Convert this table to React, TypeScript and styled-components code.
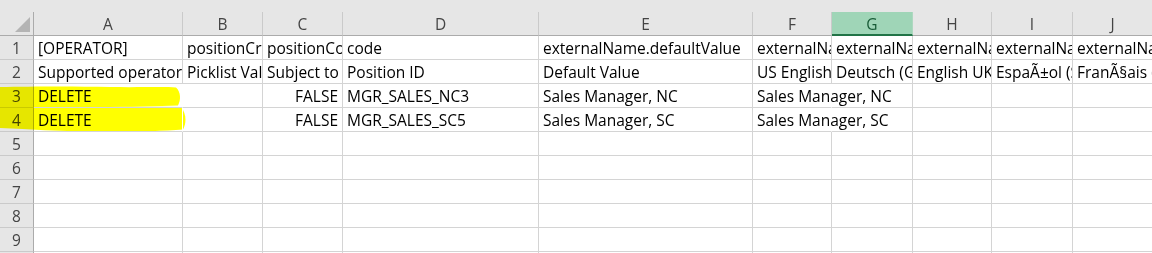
import React from "react";
import styled, {createGlobalStyle} from "styled-components";

const GlobalStyle = createGlobalStyle`
  html, body {
    margin: 0;
    padding: 0;
    background: #ffffff;
    overflow: hidden;
  }
`

type Cell = {text: string; align?: "left" | "right"};

const columns = ["A", "B", "C", "D", "E", "F", "G", "H", "I", "J"];
const widths = [34, 149, 80, 80, 196, 214, 79, 81, 79, 81, 80];
const activeColumn = "G";

const rows: Cell[][] = [
    [
        {text: "[OPERATOR]"}, {text: "positionCriticality"}, {text: "positionControlled"}, {text: "code"},
        {text: "externalName.defaultValue"}, {text: "externalName.en_US"}, {text: "externalName.de_DE"},
        {text: "externalName.en_GB"}, {text: "externalName.es_ES"}, {text: "externalName.fr_FR"},
    ],
    [
        {text: "Supported operators"}, {text: "Picklist Value"}, {text: "Subject to Position Control"},
        {text: "Position ID"}, {text: "Default Value"}, {text: "US English"}, {text: "Deutsch (German)"},
        {text: "English UK"}, {text: "EspaÃ±ol (Spanish)"}, {text: "FranÃ§ais (French)"},
    ],
    [
        {text: "DELETE"}, {text: ""}, {text: "FALSE", align: "right"}, {text: "MGR_SALES_NC3"},
        {text: "Sales Manager, NC"}, {text: "Sales Manager, NC"}, {text: ""}, {text: ""}, {text: ""}, {text: ""},
    ],
    [
        {text: "DELETE"}, {text: ""}, {text: "FALSE", align: "right"}, {text: "MGR_SALES_SC5"},
        {text: "Sales Manager, SC"}, {text: "Sales Manager, SC"}, {text: ""}, {text: ""}, {text: ""}, {text: ""},
    ],
];

const TOTAL_ROWS = 10;

// text runs on into the next cell when that one is empty
const spills = (r: number, i: number) => {
    const cell = rows[r]?.[i];
    const next = rows[r]?.[i + 1];
    return !!cell?.text && cell.align !== "right" && i + 1 < columns.length && !next?.text;
}

export default function App() {
    return (
        <>
            <GlobalStyle/>
            <Sheet>
                <Grid>
                    <Corner>
                        <CornerMark/>
                    </Corner>
                    {columns.map(c => (
                        <ColumnHeader key={c} active={c === activeColumn}>{c}</ColumnHeader>
                    ))}
                    {Array.from({length: TOTAL_ROWS}, (_, r) => (
                        <React.Fragment key={r}>
                            <RowHeader>{r + 1}</RowHeader>
                            {columns.map((c, i) => {
                                const cell = rows[r]?.[i];
                                return (
                                    <DataCell key={c} align={cell?.align ?? "left"} spill={spills(r, i)}>
                                        {cell?.text}
                                    </DataCell>
                                )
                            })}
                        </React.Fragment>
                    ))}
                </Grid>
                <Highlighter viewBox="0 0 200 140" width={200} height={140}>
                    <path d="M0,87 C30,86.5 70,86 110,87 C140,87.5 165,86.5 176,87.5 C181,92 181,100 178,105.5 C140,107 60,107.5 0,108 Z"/>
                    <path d="M0,107 C50,106.5 120,106 181,107 C186,113 187,122 183,129.5 C160,131.5 120,132 90,131.5 C60,131 30,129.5 0,128 Z"/>
                </Highlighter>
            </Sheet>
        </>
    )
}

const Sheet = styled.div`
  position: relative;
  width: 1152px;
  height: 253px;
  overflow: hidden;
  background: #e6e6e6;
  padding-top: 12px;
  box-sizing: border-box;
  font-family: "Open Sans", "Liberation Sans", sans-serif;
`
const Grid = styled.div`
  display: grid;
  grid-template-columns: ${widths.map(w => `${w}px`).join(" ")};
  grid-auto-rows: 24px;
  background: #ffffff;
`
const Corner = styled.div`
  position: relative;
  background: #e6e6e6;
  border-right: 1px solid #ababab;
  border-bottom: 1px solid #ababab;
  box-sizing: border-box;
`
const CornerMark = styled.div`
  position: absolute;
  right: 3px;
  bottom: 3px;
  width: 0;
  height: 0;
  border-left: 15px solid transparent;
  border-bottom: 15px solid #b4b4b4;
`
const ColumnHeader = styled.div<{active: boolean}>`
  display: flex;
  align-items: center;
  justify-content: center;
  box-sizing: border-box;
  background: ${p => p.active ? "#9fd5b7" : "#e6e6e6"};
  border-right: 1px solid ${p => p.active ? "#aed8c0" : "#cacaca"};
  border-bottom: ${p => p.active ? "2px solid #217346" : "1px solid #ababab"};
  color: ${p => p.active ? "#185c37" : "#444444"};
  font-size: 15.5px;
  padding-top: ${p => p.active ? "1px" : "0"};
`
const RowHeader = styled.div`
  display: flex;
  align-items: center;
  justify-content: center;
  box-sizing: border-box;
  background: #e6e6e6;
  border-right: 1px solid #ababab;
  border-bottom: 1px solid #cacaca;
  color: #444444;
  font-size: 15.5px;
`
const DataCell = styled.div<{align: "left" | "right"; spill: boolean}>`
  display: flex;
  align-items: flex-end;
  justify-content: ${p => p.align === "right" ? "flex-end" : "flex-start"};
  box-sizing: border-box;
  padding: 0 4px 1px 4px;
  border-right: 1px solid ${p => p.spill ? "#ffffff" : "#d4d4d4"};
  border-bottom: 1px solid #d4d4d4;
  white-space: nowrap;
  overflow: ${p => p.spill ? "visible" : "hidden"};
  position: relative;
  z-index: ${p => p.spill ? 1 : 0};
  color: #000000;
  font-size: 15.5px;
  line-height: 20px;
`
const Highlighter = styled.svg`
  position: absolute;
  left: 0;
  top: 0;
  pointer-events: none;
  mix-blend-mode: multiply;
  fill: #ffff00;
`
